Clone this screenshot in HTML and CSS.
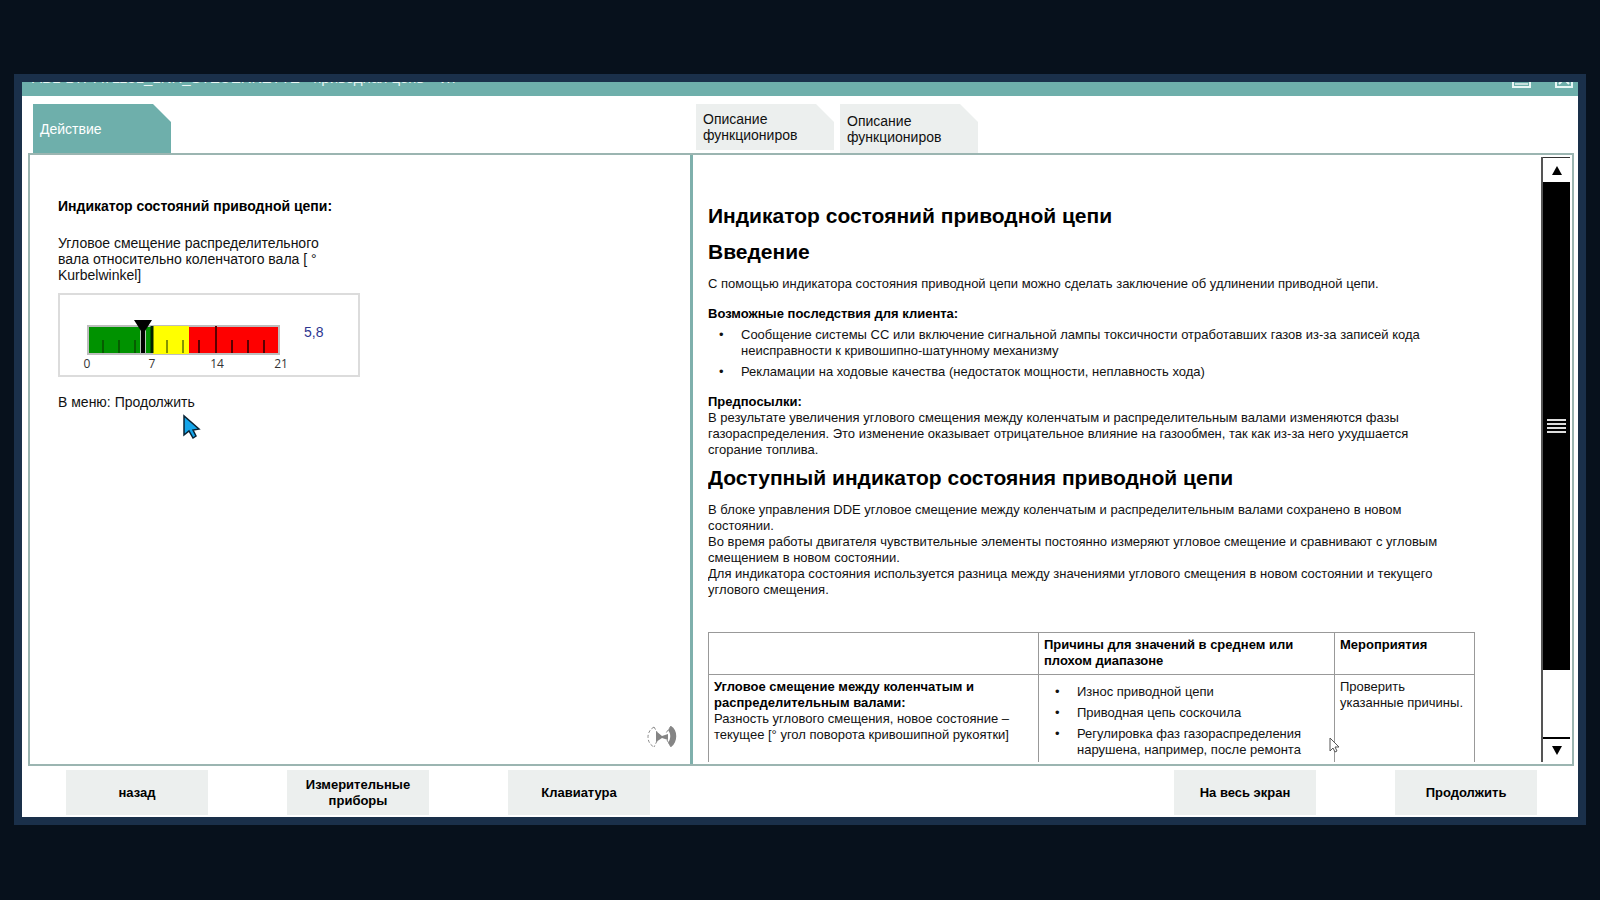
FILE: index.html
```
<!DOCTYPE html>
<html lang="ru">
<head>
    <meta charset="UTF-8">
    <meta name="viewport" content="width=device-width, initial-scale=1.0">
    <title>Индикатор состояний приводной цепи</title>
    <link rel="stylesheet" href="styles.css">
</head>
<body>
    <div class="window">
        <header class="titlebar">
            <span class="title">ABL-DIT-AT1131_LNR_STEUERKETTE - приводная цепь - V.7</span>
            <button class="win-btn" aria-label="Свернуть">
                <svg width="19" height="18" viewBox="0 0 19 18"><rect x="1" y="1" width="17" height="16" fill="none" stroke="#e8f6f4" stroke-width="2"/><path d="M3 14H16" stroke="#c5e0dd" stroke-width="2"/></svg>
            </button>
            <button class="win-btn" aria-label="Закрыть">
                <svg width="18" height="18" viewBox="0 0 18 18"><rect x="1" y="1" width="16" height="16" fill="none" stroke="#e8f6f4" stroke-width="2"/><path d="M4 4L14 14M14 4L4 14" stroke="#e8f6f4" stroke-width="2"/></svg>
            </button>
        </header>

        <nav class="tabs">
            <div class="tabs-left">
                <button class="tab active">Действие</button>
            </div>
            <div class="tabs-right">
                <button class="tab short">Описание функциониров</button>
                <button class="tab">Описание функциониров</button>
            </div>
        </nav>

        <main class="panels">
            <section class="action">
                <h2>Индикатор состояний приводной цепи:</h2>
                <p class="measure">Угловое смещение распределительного вала относительно коленчатого вала [ ° Kurbelwinkel]</p>
                <div class="gauge">
                    <svg class="scale" width="230" height="56" viewBox="0 0 230 56">
                        <rect x="19" y="5" width="193" height="30" fill="#bdbdbd"/>
                        <rect x="21" y="7" width="63" height="26" fill="#009200"/>
                        <rect x="85" y="6" width="36" height="28" fill="#ffff00"/>
                        <rect x="121" y="7" width="89" height="26" fill="#fe0000"/>
                        <path d="M35 20V33M51 20V33M67 20V33M99 20V33M115 20V33" stroke="#0c2800" stroke-width="1"/>
                        <path d="M131 20V33M164 20V33M180 20V33M196 20V33M148 6V33" stroke="#5a0000" stroke-width="2"/>
                        <path d="M84 6V33" stroke="#002000" stroke-width="3"/>
                        <path d="M72 7H78V33H72Z" fill="#b5c8b5"/>
                        <path d="M66 0H84L77 11V33H73V11Z" fill="#000"/>
                        <g class="scale-text">
                            <text x="19" y="48">0</text>
                            <text x="84" y="48">7</text>
                            <text x="149" y="48">14</text>
                            <text x="213" y="48">21</text>
                        </g>
                    </svg>
                    <output class="value">5,8</output>
                </div>
                <p>В меню: Продолжить</p>
                <svg class="busy" width="30" height="24" viewBox="0 0 30 24">
                    <path d="M24 1C31 5 31 17 24 22L21 18C24 13 24 9 21 5Z" fill="#858585"/>
                    <path d="M9 6L15 11L21 9V15L15 13L9 17Z" fill="#858585"/>
                    <path d="M24 1L19 8M20 15L24 22M7 2C-1 6 -1 18 7 22M7 2L10 7M10 16L7 22" fill="none" stroke="#8a8a8a" stroke-dasharray="3 2"/>
                </svg>
            </section>

            <section class="document">
                <article class="doc-text">
                    <h1>Индикатор состояний приводной цепи</h1>
                    <h1>Введение</h1>
                    <p>С помощью индикатора состояния приводной цепи можно сделать заключение об удлинении приводной цепи.</p>
                    <h3>Возможные последствия для клиента:</h3>
                    <ul>
                        <li>Сообщение системы CC или включение сигнальной лампы токсичности отработавших газов из-за записей кода неисправности к кривошипно-шатунному механизму</li>
                        <li>Рекламации на ходовые качества (недостаток мощности, неплавность хода)</li>
                    </ul>
                    <h3>Предпосылки:</h3>
                    <p>В результате увеличения углового смещения между коленчатым и распределительным валами изменяются фазы газораспределения. Это изменение оказывает отрицательное влияние на газообмен, так как из-за него ухудшается сгорание топлива.</p>
                    <h1>Доступный индикатор состояния приводной цепи</h1>
                    <p>В блоке управления DDE угловое смещение между коленчатым и распределительным валами сохранено в новом состоянии.<br>
                    Во время работы двигателя чувствительные элементы постоянно измеряют угловое смещение и сравнивают с угловым смещением в новом состоянии.<br>
                    Для индикатора состояния используется разница между значениями углового смещения в новом состоянии и текущего углового смещения.</p>
                    <table>
                        <colgroup><col class="col-name"><col class="col-cause"><col></colgroup>
                        <thead>
                            <tr><th></th><th>Причины для значений в среднем или плохом диапазоне</th><th>Мероприятия</th></tr>
                        </thead>
                        <tbody>
                            <tr>
                                <td><b>Угловое смещение между коленчатым и распределительным валами:</b><br>Разность углового смещения, новое состояние – текущее [° угол поворота кривошипной рукоятки]</td>
                                <td>
                                    <ul>
                                        <li>Износ приводной цепи</li>
                                        <li>Приводная цепь соскочила</li>
                                        <li>Регулировка фаз газораспределения нарушена, например, после ремонта</li>
                                    </ul>
                                </td>
                                <td>Проверить указанные причины.</td>
                            </tr>
                        </tbody>
                    </table>
                </article>
                <div class="scrollbar">
                    <button class="arrow up" aria-label="Вверх"><svg width="10" height="9" viewBox="0 0 10 9"><path d="M5 0L10 9H0Z"/></svg></button>
                    <div class="track">
                        <div class="thumb"><i></i><i></i><i></i><i></i></div>
                    </div>
                    <button class="arrow down" aria-label="Вниз"><svg width="10" height="9" viewBox="0 0 10 9"><path d="M5 9L10 0H0Z"/></svg></button>
                </div>
            </section>
        </main>

        <footer class="buttons">
            <button>назад</button>
            <button>Измерительные приборы</button>
            <button>Клавиатура</button>
            <button class="to-right">На весь экран</button>
            <button>Продолжить</button>
        </footer>
    </div>

    <svg class="cursor cursor-blue" width="20" height="26" viewBox="0 0 20 26"><path d="M2 2V21L7 17L11 24L14 22L11 16L17 15Z" fill="#15a5ea" stroke="#0a2334" stroke-width="1.5"/></svg>
    <svg class="cursor cursor-white" width="12" height="18" viewBox="0 0 12 18"><path d="M1 1V14L4 11L6 15L8 14L6 10H10Z" fill="#fff" stroke="#555"/></svg>
</body>
</html>
```
FILE: styles.css
```
* {
    box-sizing: border-box;
}
body {
    margin: 0;
    padding: 74px 14px 75px;
    height: 100vh;
    background: #07111c;
    color: #111;
    font: 14px/16px "Liberation Sans", Arial, sans-serif;
}
h1, h2, h3, p, ul {
    margin: 0;
}
h1, h2, h3, th, b {
    color: #000;
}
button {
    border: 0;
    padding: 0;
    background: none;
    color: inherit;
    font: inherit;
}
.window {
    display: flex;
    flex-direction: column;
    height: 100%;
    border: 8px solid #1a304a;
    background: #fff;
}

/* Titelleiste */
.titlebar {
    display: flex;
    align-items: flex-end;
    gap: 24px;
    height: 14px;
    padding: 0 5px 8px 10px;
    background: #6eafab;
    overflow: hidden;
}
.title {
    flex: 1;
    margin-bottom: 2px;
    color: #e8f6f4;
    font-size: 15px;
}
.win-btn, .win-btn svg {
    display: block;
}

/* Reiter */
.tabs {
    display: flex;
    height: 57px;
    padding: 8px 6px 0 11px;
}
.tabs-left {
    width: 663px;
}
.tabs-right {
    display: flex;
    align-items: flex-start;
    gap: 6px;
}
.tab {
    width: 138px;
    height: 49px;
    padding: 0 28px 0 7px;
    background: #ecefee;
    text-align: left;
    clip-path: polygon(0 0, 120px 0, 100% 18px, 100% 100%, 0 100%);
}
.tab.short {
    height: 46px;
}
.tab.active {
    background: #6eafab;
    color: #fff;
}

/* Hauptbereich */
.panels {
    flex: 1;
    display: flex;
    min-height: 0;
    margin: 0 4px 0 6px;
    border: 2px solid #9bb5b1;
}
.action {
    position: relative;
    width: 663px;
    padding: 43px 28px;
    border-right: 3px solid #7fb0ac;
}
.action h2 {
    font-size: 14px;
    line-height: 16px;
}
.measure {
    width: 280px;
    margin: 21px 0 10px;
}
.gauge {
    display: flex;
    width: 302px;
    height: 84px;
    margin-bottom: 17px;
    padding: 25px 8px 0;
    border: 2px solid #dcdcdc;
}
.scale-text {
    font: 12px "Open Sans", sans-serif;
    fill: #333;
    text-anchor: middle;
}
.value {
    padding: 4px 0 0 6px;
    color: #2d3590;
}
.busy {
    position: absolute;
    right: 13px;
    bottom: 15px;
}
.document {
    flex: 1;
    display: flex;
    min-width: 0;
    padding: 2px 2px 2px 15px;
}
.doc-text {
    flex: 1;
    padding: 47px 66px 0 0;
    overflow: hidden;
    font-size: 13px;
    line-height: 16px;
}
.doc-text p {
    max-width: 745px;
}
.doc-text h1 {
    margin-bottom: 12px;
    font-size: 21px;
    line-height: 24px;
}
.doc-text h3 {
    margin-top: 14px;
    font-size: 13px;
    line-height: 16px;
}
.doc-text ul {
    padding-left: 33px;
    list-style: none;
}
.doc-text li {
    padding-top: 5px;
}
.doc-text li::before {
    content: "•";
    float: left;
    margin-left: -22px;
}
.doc-text p + h1 {
    margin-top: 8px;
}
table {
    width: 100%;
    margin-top: 34px;
    border-collapse: collapse;
    table-layout: fixed;
}
th, td {
    padding: 4px 5px 5px;
    border: 1px solid #999;
    text-align: left;
    vertical-align: top;
}
td {
    height: 110px;
}
.col-name {
    width: 330px;
}
.col-cause {
    width: 296px;
}

/* Bildlaufleiste */
.scrollbar {
    display: flex;
    flex-direction: column;
    width: 29px;
    border-left: 2px solid #555;
}
.arrow {
    display: flex;
    align-items: center;
    justify-content: center;
    height: 25px;
    border-top: 1px solid #333;
}
.arrow.down {
    border-top: 2px solid #000;
}
.track {
    flex: 1;
}
.thumb {
    display: flex;
    flex-direction: column;
    align-items: center;
    justify-content: center;
    gap: 2px;
    height: 88%;
    background: #000;
}
.thumb i {
    width: 19px;
    height: 2px;
    background: #ddd;
}

/* Schaltflächen unten */
.buttons {
    display: flex;
    gap: 79px;
    padding: 4px 41px 2px 44px;
}
.buttons button {
    width: 142px;
    height: 45px;
    padding: 0 10px;
    background: #ecefee;
    color: #000;
    font-size: 13px;
    line-height: 16px;
    font-weight: bold;
}
.buttons .to-right {
    margin-left: auto;
}

/* Mauszeiger */
.cursor {
    position: absolute;
}
.cursor-blue {
    left: 182px;
    top: 414px;
}
.cursor-white {
    left: 1329px;
    top: 737px;
}
```
